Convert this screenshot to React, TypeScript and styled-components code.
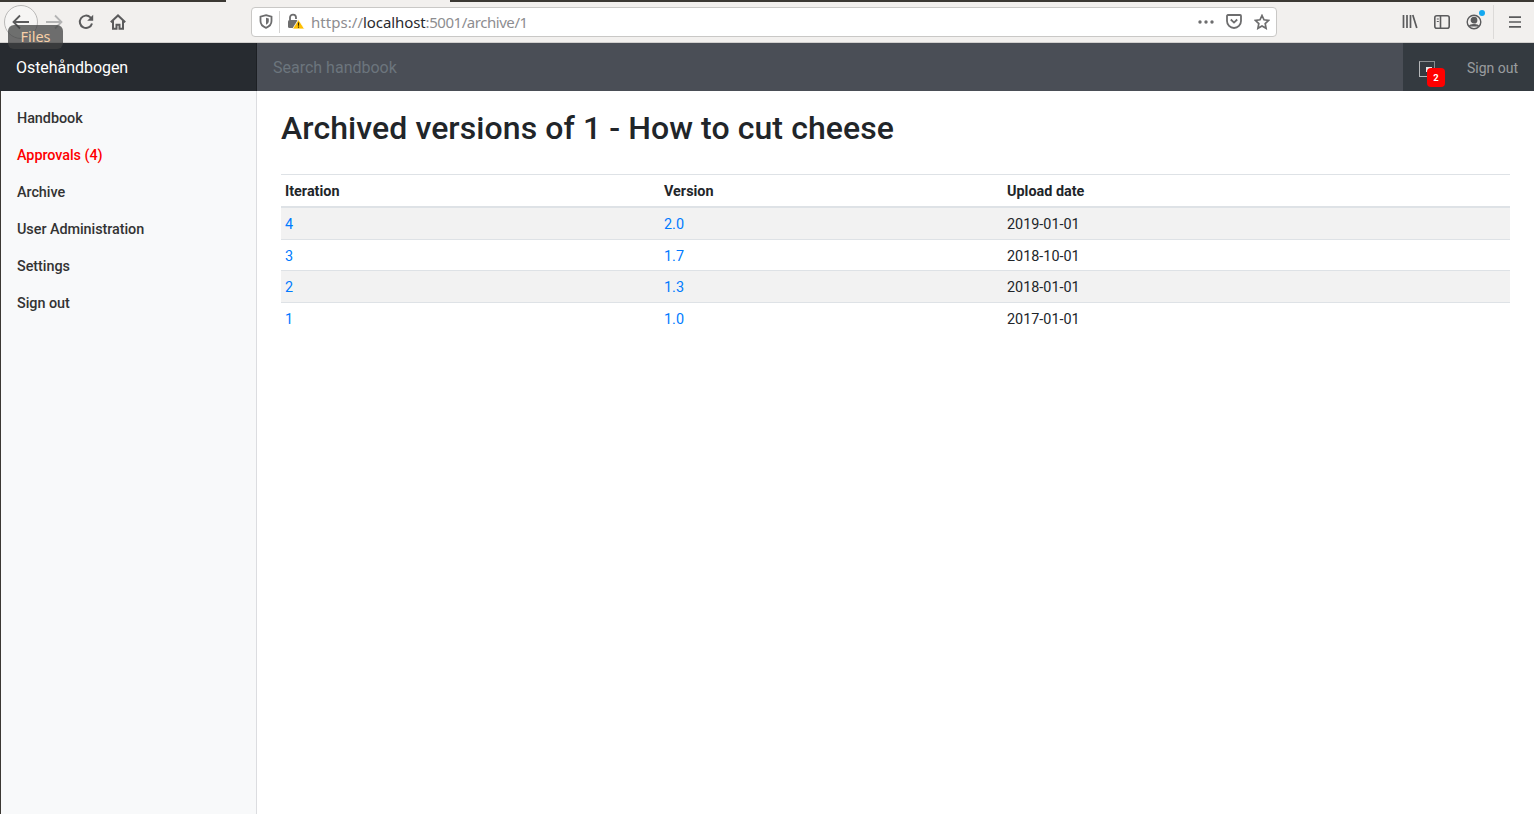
import React from 'react';
import styled, { createGlobalStyle } from 'styled-components';

const GlobalStyle = createGlobalStyle`
  html, body {
    margin: 0;
    padding: 0;
    height: 100%;
    overflow: hidden;
    background: #fff;
  }
  body {
    font-family: Roboto, "Liberation Sans", sans-serif;
    font-size: 14.4px;
    color: #212529;
  }
`;

const NAV_ITEMS = [
  { label: 'Handbook' },
  { label: 'Approvals (4)', alert: true },
  { label: 'Archive' },
  { label: 'User Administration' },
  { label: 'Settings' },
  { label: 'Sign out' },
];

const ROWS = [
  { iteration: '4', version: '2.0', date: '2019-01-01' },
  { iteration: '3', version: '1.7', date: '2018-10-01' },
  { iteration: '2', version: '1.3', date: '2018-01-01' },
  { iteration: '1', version: '1.0', date: '2017-01-01' },
];

export default function App() {
  return (
    <Page>
      <GlobalStyle />
      <BrowserBar>
        <TabEdge />
        <NavButtons>
          <BackRing>
            <svg width="20" height="20" viewBox="0 0 20 20" fill="none" stroke="#5b5b5c" strokeWidth="1.8">
              <path d="M18 10H2.5M9 3.5 2.5 10 9 16.5" />
            </svg>
          </BackRing>
          <ForwardIcon>
            <svg width="20" height="20" viewBox="0 0 20 20" fill="none" stroke="#b4b4b4" strokeWidth="1.8">
              <path d="M2 10h15.5M11 3.5l6.5 6.5-6.5 6.5" />
            </svg>
          </ForwardIcon>
          <ToolIcon>
            <svg width="16" height="16" viewBox="0 0 16 16" fill="none" stroke="#5b5b5c" strokeWidth="2">
              <path d="M14 9.500A6.200 6.200 0 1 1 12.400 3.400L14.200 5.200" />
              <path d="M15.200 .8v6h-6z" fill="#5b5b5c" stroke="none" />
            </svg>
          </ToolIcon>
          <ToolIcon>
            <svg width="16" height="16" viewBox="0 0 16 16" fill="none" stroke="#5b5b5c" strokeWidth="2">
              <path d="M.8 8.200 8 1.400l7.200 6.800" />
              <path d="M3 6.600v8.200h3.500v-4h3v4H13V6.600" />
            </svg>
          </ToolIcon>
        </NavButtons>
        <UrlBar>
          <UrlIcon>
            <svg width="14" height="15" viewBox="0 0 14 15" fill="none" stroke="#6d6d6e" strokeWidth="1.8">
              <path d="M7 1.200 12.500 2.600V7c0 3.400-2.400 5.600-5.500 6.800C3.900 12.600 1.500 10.400 1.500 7V2.600Z" />
              <path d="M7 3.800 9.800 4.500V7c0 1.800-1.200 3-2.800 3.800Z" fill="#6d6d6e" stroke="none" />
            </svg>
          </UrlIcon>
          <UrlDivider />
          <LockIcon>
            <svg width="18" height="17" viewBox="0 0 18 17">
              <path d="M3 7V4.600a3 3 0 0 1 6 0V6" fill="none" stroke="#6d6d6e" strokeWidth="1.8" />
              <rect x="1" y="7" width="10" height="8" rx="1.5" fill="#6d6d6e" />
              <path d="M11.500 6.500 17.500 16H5.500Z" fill="#ffbf00" stroke="#fff" strokeWidth="0.8" />
              <path d="M11.500 9.500v3.300M11.500 13.600v1.200" stroke="#3a2a00" strokeWidth="1.2" />
            </svg>
          </LockIcon>
          <UrlText>
            <UrlMuted>https://</UrlMuted>
            <UrlHost>localhost</UrlHost>
            <UrlMuted $tight>:5001/archive/1</UrlMuted>
          </UrlText>
          <UrlActions>
            <svg width="16" height="4" viewBox="0 0 16 4" fill="#6d6d6e">
              <circle cx="2" cy="2" r="1.7" />
              <circle cx="8" cy="2" r="1.7" />
              <circle cx="14" cy="2" r="1.7" />
            </svg>
            <svg width="16" height="15" viewBox="0 0 16 15" fill="none" stroke="#6d6d6e" strokeWidth="1.8">
              <path d="M1.900 1h12.200c.5 0 .9.400.9.900V7a7 7 0 0 1-14 0V1.900c0-.5.400-.9.900-.9Z" />
              <path d="M4.800 5.500 8 8.600l3.200-3.100" />
            </svg>
            <svg width="16" height="16" viewBox="0 0 16 16" fill="none" stroke="#6d6d6e" strokeWidth="1.7">
              <path d="M8 1.500 10 5.800l4.700.6-3.500 3.200.9 4.700L8 12l-4.100 2.300.9-4.700L1.300 6.400 6 5.800Z" />
            </svg>
          </UrlActions>
        </UrlBar>
        <BrowserTools>
          <svg width="16" height="15" viewBox="0 0 16 15" fill="none" stroke="#5b5b5c" strokeWidth="1.7">
            <path d="M1.500 1v13M5 1v13M8.500 1v13M10.800 1l4 13" />
          </svg>
          <svg width="16" height="14" viewBox="0 0 16 14" fill="none" stroke="#5b5b5c" strokeWidth="1.6">
            <rect x="0.800" y="0.800" width="14.400" height="12.400" rx="2" />
            <path d="M6.500 1v12" />
            <path d="M2.800 4h2M2.800 6.500h2" strokeWidth="1.2" />
          </svg>
          <ProfileIcon>
            <svg width="16" height="16" viewBox="0 0 16 16" fill="none" stroke="#5b5b5c" strokeWidth="1.4">
              <circle cx="8" cy="8" r="6.800" />
              <circle cx="8" cy="6.200" r="2.700" fill="#5b5b5c" />
              <path d="M3.300 12.500c1-2.500 8.400-2.500 9.400 0" fill="#5b5b5c" />
            </svg>
            <ProfileDot />
          </ProfileIcon>
          <ToolDivider />
          <svg width="14" height="12" viewBox="0 0 14 12" fill="none" stroke="#5b5b5c" strokeWidth="1.7">
            <path d="M1 1.200h12M1 6h12M1 10.800h12" />
          </svg>
        </BrowserTools>
        <FilesTip>Files</FilesTip>
      </BrowserBar>

      <TopNav>
        <Brand>Ostehåndbogen</Brand>
        <Search>Search handbook</Search>
        <TopActions>
          <NotifyIcon>
            <NotifyBroken />
            <Badge>2</Badge>
          </NotifyIcon>
          <SignOut>Sign out</SignOut>
        </TopActions>
      </TopNav>

      <Body>
        <Sidebar>
          {NAV_ITEMS.map(item => (
            <NavLink key={item.label} $alert={item.alert}>
              {item.label}
            </NavLink>
          ))}
        </Sidebar>
        <Main>
          <Heading>Archived versions of 1 - How to cut cheese</Heading>
          <Table>
            <colgroup>
              <col style={{ width: 379 }} />
              <col style={{ width: 343 }} />
              <col />
            </colgroup>
            <thead>
              <tr>
                <HeadCell>Iteration</HeadCell>
                <HeadCell>Version</HeadCell>
                <HeadCell>Upload date</HeadCell>
              </tr>
            </thead>
            <tbody>
              {ROWS.map(row => (
                <Row key={row.iteration}>
                  <Cell><CellLink>{row.iteration}</CellLink></Cell>
                  <Cell><CellLink>{row.version}</CellLink></Cell>
                  <Cell>{row.date}</Cell>
                </Row>
              ))}
            </tbody>
          </Table>
        </Main>
      </Body>
    </Page>
  );
}

const Page = styled.div`
  display: flex;
  flex-direction: column;
  width: 1534px;
  height: 814px;
  overflow: hidden;
`;

const BrowserBar = styled.header`
  position: relative;
  display: flex;
  align-items: center;
  flex: none;
  height: 43px;
  box-sizing: border-box;
  padding: 1px 0 0 4px;
  background: #f2f0ee;
  border-bottom: 1px solid #d2d0ce;
`;

const TabEdge = styled.div`
  position: absolute;
  top: 0;
  left: 0;
  right: 0;
  height: 2px;
  background: linear-gradient(
    to right,
    #3b3833 0 226px,
    transparent 226px 450px,
    #3b3833 450px
  );
`;

const NavButtons = styled.div`
  display: flex;
  align-items: center;
  width: 247px;
  flex: none;
`;

const BackRing = styled.div`
  display: flex;
  align-items: center;
  justify-content: center;
  width: 32px;
  height: 32px;
  flex: none;
  border: 1px solid #b9b8b7;
  border-radius: 50%;
  background: #f6f5f4;
`;

const ForwardIcon = styled.div`
  display: flex;
  width: 20px;
  margin-left: 6px;
`;

const ToolIcon = styled.div`
  display: flex;
  width: 16px;
  margin-left: 14px;

  & + & {
    margin-left: 16px;
  }
`;

const UrlBar = styled.div`
  display: flex;
  align-items: center;
  width: 1026px;
  height: 30px;
  flex: none;
  box-sizing: border-box;
  padding: 0 6px 0 7px;
  background: #fff;
  border: 1px solid #c9c8c6;
  border-radius: 4px;
`;

const UrlIcon = styled.div`
  display: flex;
  width: 14px;
`;

const UrlDivider = styled.div`
  width: 1px;
  height: 22px;
  margin: 0 7px 0 6px;
  background: #d4d3d2;
`;

const LockIcon = styled.div`
  display: flex;
  width: 18px;
  margin-right: 6px;
`;

const UrlText = styled.div`
  flex: 1;
  font-family: "Noto Sans", sans-serif;
  font-size: 15px;
  letter-spacing: 0.05px;
  line-height: 20px;
`;

const UrlMuted = styled.span<{ $tight?: boolean }>`
  color: #8d8d90;
  letter-spacing: ${props => (props.$tight ? '-0.45px' : '0.05px')};
`;

const UrlHost = styled.span`
  color: #2a2a2e;
  letter-spacing: -0.1px;
`;

const UrlActions = styled.div`
  display: flex;
  align-items: center;
  gap: 12px;
`;

const BrowserTools = styled.div`
  display: flex;
  align-items: center;
  gap: 16px;
  margin-left: 125px;
`;

const ProfileIcon = styled.div`
  position: relative;
  display: flex;
`;

const ProfileDot = styled.span`
  position: absolute;
  top: -4px;
  right: -3px;
  width: 6px;
  height: 6px;
  border-radius: 50%;
  background: #14a8f0;
`;

const ToolDivider = styled.div`
  width: 1px;
  height: 34px;
  margin: 0 -2px 0 -5px;
  background: #dcdad8;
`;

const FilesTip = styled.div`
  position: absolute;
  left: 8px;
  top: 25px;
  width: 55px;
  height: 24px;
  box-sizing: border-box;
  padding-top: 2px;
  border-radius: 6px;
  background: rgba(64, 66, 66, 0.75);
  color: #f8d0a8;
  font-family: "Noto Sans", sans-serif;
  font-size: 14.5px;
  line-height: 18px;
  text-align: center;
`;

const TopNav = styled.nav`
  display: flex;
  align-items: stretch;
  flex: none;
  height: 48px;
  background: #343a40;
`;

const Brand = styled.div`
  display: flex;
  align-items: center;
  width: 257px;
  flex: none;
  box-sizing: border-box;
  padding-left: 16px;
  background: #272b30;
  color: #fff;
  font-size: 16px;
  letter-spacing: -0.05px;
  box-shadow: inset -1px 0 0 rgba(0, 0, 0, 0.25);
`;

const Search = styled.div`
  display: flex;
  align-items: center;
  flex: 1;
  padding-left: 16px;
  background: #4a4e56;
  color: #6c757d;
  font-size: 16px;
`;

const TopActions = styled.div`
  display: flex;
  align-items: center;
  width: 131px;
  flex: none;
`;

const NotifyIcon = styled.div`
  position: relative;
  width: 16px;
  height: 16px;
  margin: 4px 0 0 16px;
  box-sizing: border-box;
  border: 1px solid #8a8d90;
  border-left-color: #b5b7b9;
  border-bottom-color: #b5b7b9;
`;

const NotifyBroken = styled.span`
  position: absolute;
  top: 5px;
  left: 6px;
  width: 6px;
  height: 5px;
  background: #e8e8ea;
`;

const Badge = styled.span`
  position: absolute;
  left: 7px;
  top: 6px;
  width: 18px;
  height: 19px;
  border-radius: 4px;
  background: #f00;
  color: #fff;
  font-size: 9.5px;
  font-weight: 700;
  line-height: 19px;
  text-align: center;
`;

const SignOut = styled.div`
  margin-left: auto;
  padding: 1px 16px 0 0;
  color: rgba(255, 255, 255, 0.5);
  font-size: 14px;
`;

const Body = styled.div`
  display: flex;
  flex: 1;
  min-height: 0;
`;

const Sidebar = styled.aside`
  display: flex;
  flex-direction: column;
  width: 257px;
  flex: none;
  box-sizing: border-box;
  padding-top: 9px;
  background: #f8f9fa;
  border-left: 1px solid #3b3833;
  border-right: 1px solid #dcdde0;
`;

const NavLink = styled.a<{ $alert?: boolean }>`
  display: block;
  padding: 8px 16px;
  color: ${props => (props.$alert ? '#f00' : '#333')};
  font-size: 14.4px;
  font-weight: 500;
  letter-spacing: -0.05px;
  line-height: 21px;
`;

const Main = styled.main`
  flex: 1;
  min-width: 0;
  padding: 0 24px;
`;

const Heading = styled.h1`
  margin: 16px 0 25px;
  font-size: 32px;
  font-weight: 500;
  letter-spacing: 0.08px;
  line-height: 42px;
  color: #212529;
`;

const Table = styled.table`
  width: 100%;
  table-layout: fixed;
  border-collapse: collapse;
`;

const HeadCell = styled.th`
  padding: 5.8px 4px 4.3px;
  border-top: 1px solid #dee2e6;
  border-bottom: 2px solid #dee2e6;
  font-weight: 700;
  line-height: 21px;
  text-align: left;
`;

const Row = styled.tr`
  &:nth-of-type(odd) {
    background: #f2f2f2;
  }
`;

const Cell = styled.td`
  padding: 6px 4px 3.6px;
  border-top: 1px solid #dee2e6;
  line-height: 21px;
`;

const CellLink = styled.a`
  color: #007bff;
`;
